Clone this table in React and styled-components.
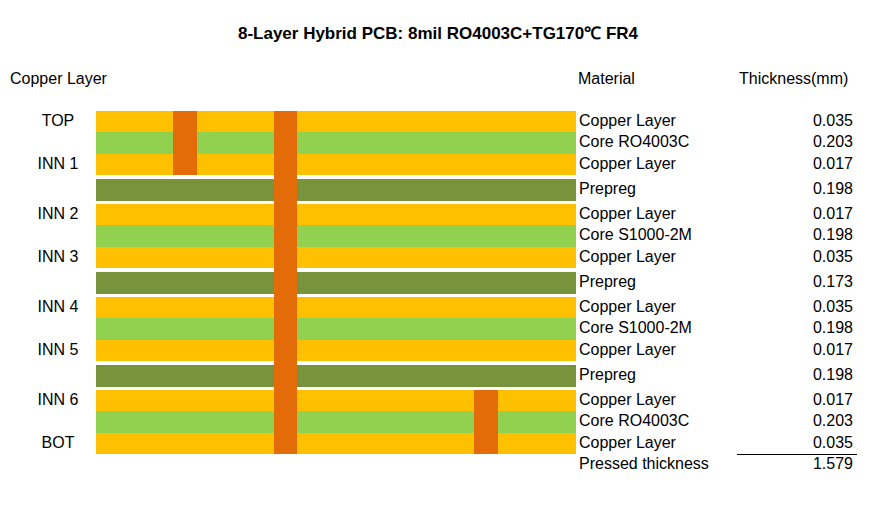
import React from "react";
import styled, { createGlobalStyle } from "styled-components";

const COLORS = {
  copper: "#FFC000",
  core: "#92D050",
  prepreg: "#77933C",
  via: "#E36C09",
};

const layers = [
  { kind: "copper", label: "TOP", material: "Copper Layer", thickness: "0.035" },
  { kind: "core", material: "Core RO4003C", thickness: "0.203" },
  { kind: "copper", label: "INN 1", material: "Copper Layer", thickness: "0.017" },
  { kind: "prepreg", material: "Prepreg", thickness: "0.198" },
  { kind: "copper", label: "INN 2", material: "Copper Layer", thickness: "0.017" },
  { kind: "core", material: "Core S1000-2M", thickness: "0.198" },
  { kind: "copper", label: "INN 3", material: "Copper Layer", thickness: "0.035" },
  { kind: "prepreg", material: "Prepreg", thickness: "0.173" },
  { kind: "copper", label: "INN 4", material: "Copper Layer", thickness: "0.035" },
  { kind: "core", material: "Core S1000-2M", thickness: "0.198" },
  { kind: "copper", label: "INN 5", material: "Copper Layer", thickness: "0.017" },
  { kind: "prepreg", material: "Prepreg", thickness: "0.198" },
  { kind: "copper", label: "INN 6", material: "Copper Layer", thickness: "0.017" },
  { kind: "core", material: "Core RO4003C", thickness: "0.203" },
  { kind: "copper", label: "BOT", material: "Copper Layer", thickness: "0.035" },
];

// vias drawn over the stack, coordinates relative to the stack box
const vias = [
  { left: 77, top: 0, height: 64, width: 24 },
  { left: 178, top: 0, height: 343, width: 23 },
  { left: 378, top: 279, height: 64, width: 24 },
];

const ROW_HEIGHT = { copper: 21, core: 22, prepreg: 22 };

function App() {
  return (
    <>
      <GlobalStyle />
      <Page>
        <Title>8-Layer Hybrid PCB: 8mil RO4003C+TG170℃ FR4</Title>
        <HeaderRow>
          <HeaderCell>Copper Layer</HeaderCell>
          <span />
          <HeaderCell $pad>Material</HeaderCell>
          <HeaderCell $pad>Thickness(mm)</HeaderCell>
        </HeaderRow>

        <Stack>
          {layers.map((layer, i) => (
            <Row key={i} $kind={layer.kind}>
              <Label>{layer.label}</Label>
              <Bar $kind={layer.kind} />
              <Material>{layer.material}</Material>
              <Thickness $last={i === layers.length - 1}>
                {layer.thickness}
              </Thickness>
            </Row>
          ))}
          {vias.map((v, i) => (
            <Via key={i} $left={v.left} $top={v.top} $height={v.height} $width={v.width} />
          ))}
        </Stack>

        <TotalRow>
          <span />
          <span />
          <Material>Pressed thickness</Material>
          <Thickness>1.579</Thickness>
        </TotalRow>
      </Page>
    </>
  );
}

export default App;

const GlobalStyle = createGlobalStyle`
  html, body {
    margin: 0;
    padding: 0;
    background: #ffffff;
  }
  body {
    font-family: "Liberation Sans", Arial, sans-serif;
    color: #000000;
  }
`;

const Page = styled.div`
  width: 884px;
  height: 507px;
  display: flex;
  flex-direction: column;
`;

const Title = styled.h1`
  margin: 0;
  padding: 25px 8px 0 0;
  height: 44px;
  box-sizing: border-box;
  text-align: center;
  font-size: 17px;
  font-weight: 700;
  line-height: 18px;
`;

const columns = "96px 480px 161px 120px";

const HeaderRow = styled.div`
  display: grid;
  grid-template-columns: ${columns};
  height: 67px;
  padding-top: 26px;
  box-sizing: border-box;
  font-size: 16px;
  line-height: 18px;
`;

const HeaderCell = styled.div`
  padding-left: ${({ $pad }) => ($pad ? "2px" : "10px")};
  white-space: nowrap;
`;

const Stack = styled.div`
  position: relative;
  display: flex;
  flex-direction: column;
`;

const Row = styled.div`
  display: grid;
  grid-template-columns: ${columns};
  height: ${({ $kind }) => ROW_HEIGHT[$kind]}px;
  margin: ${({ $kind }) => ($kind === "prepreg" ? "4px 0 3px" : "0")};
  font-size: 16px;
  line-height: ${({ $kind }) => ROW_HEIGHT[$kind] - 2}px;
`;

const Label = styled.div`
  padding-left: 20px;
  text-align: center;
  white-space: nowrap;
`;

const Bar = styled.div`
  background: ${({ $kind }) => COLORS[$kind]};
`;

const Material = styled.div`
  padding-left: 3px;
  white-space: nowrap;
`;

const Thickness = styled.div`
  padding-right: 4px;
  text-align: right;
  box-sizing: border-box;
  border-bottom: ${({ $last }) => ($last ? "1px solid #000" : "none")};
  margin-bottom: ${({ $last }) => ($last ? "-1px" : "0")};
`;

const Via = styled.div`
  position: absolute;
  left: ${({ $left }) => $left + 96}px;
  top: ${({ $top }) => $top}px;
  width: ${({ $width }) => $width}px;
  height: ${({ $height }) => $height}px;
  background: ${COLORS.via};
`;

const TotalRow = styled.div`
  display: grid;
  grid-template-columns: ${columns};
  height: 20px;
  font-size: 16px;
  line-height: 20px;
`;
